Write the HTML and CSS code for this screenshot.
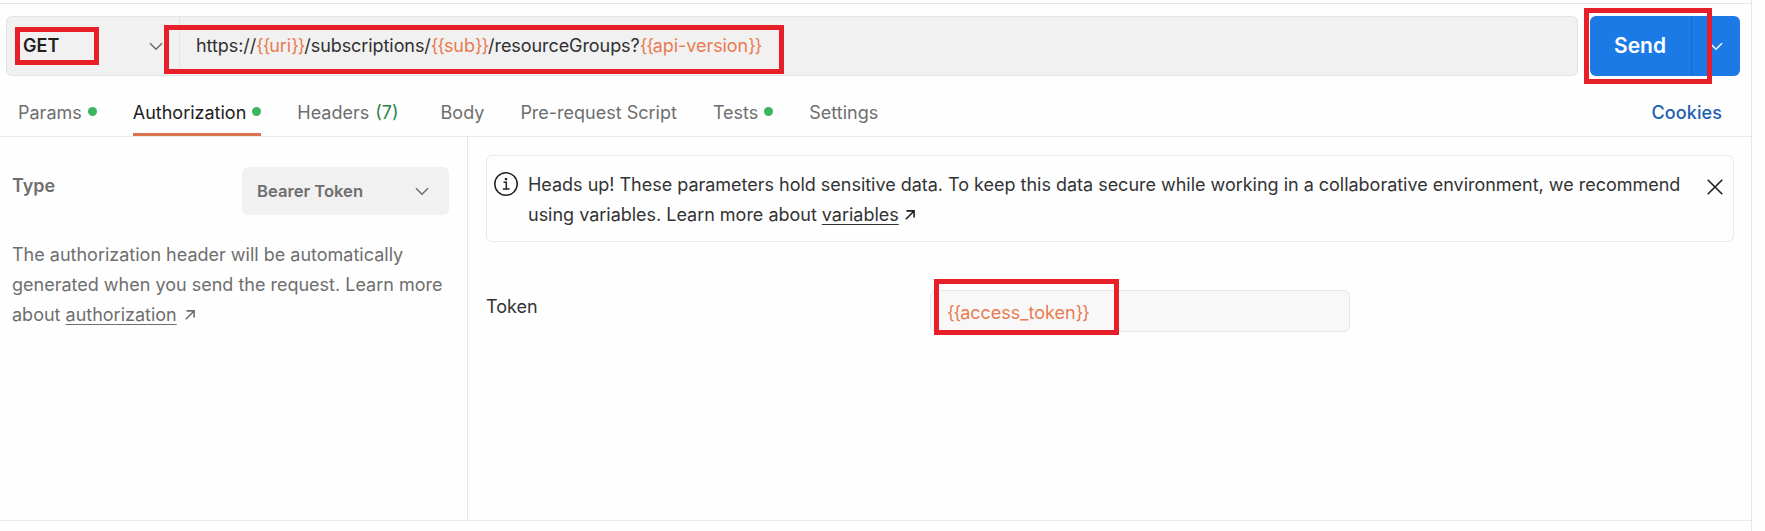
FILE: index.html
```html
<!DOCTYPE html>
<html lang="en">
<head>
<meta charset="utf-8">
<title>Request</title>
<link rel="stylesheet" href="styles.css">
</head>
<body>
<main class="pane">
  <div class="request-bar">
    <div class="url-box">
      <div class="method"><span class="method-name">GET</span>
        <svg class="chevron" width="14" height="9" viewBox="0 0 14 9"><path d="M1 1.2 7 7.2 13 1.2"/></svg>
      </div>
      <div class="url">https://<span class="var"><span class="brace">{{</span>uri<span class="brace">}}</span></span>/subscriptions/<span class="var"><span class="brace">{{</span>sub<span class="brace">}}</span></span>/resourceGroups?<span class="var"><span class="brace">{{</span>api-version<span class="brace">}}</span></span></div>
    </div>
    <div class="send">
      <span class="send-label">Send</span>
      <span class="send-more"><svg class="chevron light" width="14" height="9" viewBox="0 0 14 9"><path d="M1 1.2 7 7.2 13 1.2"/></svg></span>
    </div>
  </div>
  <nav class="tabs">
    <a class="tab">Params<i class="dot"></i></a>
    <a class="tab active">Authorization<i class="dot"></i></a>
    <a class="tab headers">Headers <span class="count">(7)</span></a>
    <a class="tab">Body</a>
    <a class="tab">Pre-request Script</a>
    <a class="tab">Tests<i class="dot"></i></a>
    <a class="tab">Settings</a>
    <a class="cookies">Cookies</a>
  </nav>
  <div class="content">
    <aside class="auth">
      <div class="type-row">
        <span class="type-label">Type</span>
        <div class="select"><span>Bearer Token</span>
          <svg class="chevron" width="14" height="9" viewBox="0 0 14 9"><path d="M1 1.2 7 7.2 13 1.2"/></svg>
        </div>
      </div>
      <p class="help">The authorization header will be automatically<br>generated when you send the request. Learn more<br>about <a class="link">authorization</a><svg class="arrow" width="10" height="10" viewBox="0 0 10 10"><path d="M.8 9.2 8.8 1.2M1.5 .9H9.1V7.5"/></svg></p>
    </aside>
    <section class="detail">
      <div class="notice">
        <svg class="info" width="24" height="24" viewBox="0 0 24 24"><circle cx="12" cy="12" r="11.2"/><path d="M9.5 10.3H12.3V16.7M8.8 17H15.5"/><rect x="10.8" y="6" width="2.4" height="2.2"/></svg>
        <p class="notice-text">Heads up! These parameters hold sensitive data. To keep this data secure while working in a collaborative environment, we recommend<br>using variables. Learn more about <a class="link">variables</a><svg class="arrow" width="10" height="10" viewBox="0 0 10 10"><path d="M.8 9.2 8.8 1.2M1.5 .9H9.1V7.5"/></svg></p>
        <svg class="close" width="16" height="16" viewBox="0 0 16 16"><path d="M.7.7 15.3 15.3M15.3.7.7 15.3"/></svg>
      </div>
      <div class="token-row">
        <span class="token-label">Token</span>
        <div class="token-input"><span class="var"><span class="brace">{{</span>access_token<span class="brace">}}</span></span></div>
      </div>
    </section>
  </div>
</main>
<div class="mark mark-method"></div>
<div class="mark mark-url"></div>
<div class="mark mark-send"></div>
<div class="mark mark-token"></div>
</body>
</html>
```
FILE: styles.css
```css
* { box-sizing: border-box; }
body {
  margin: 0;
  height: 531px;
  position: relative;
  overflow: hidden;
  background: #fefefe;
  font: 18px/30px Inter, "Liberation Sans", sans-serif;
  color: #6e6e6e;
}
p { margin: 0; white-space: nowrap; }
svg { display: block; flex: none; fill: none; }
.pane {
  width: 1752px;
  height: 531px;
  padding-top: 3px;
  border-right: 1px solid #e6e6e6;
}
.request-bar {
  display: flex;
  gap: 12px;
  height: 73px;
  padding: 12px 11px 0 6px;
  border-top: 1px solid #e6e6e6;
}
.url-box {
  display: flex;
  width: 1572px;
  height: 60px;
  background: #f1f1f1;
  border: 1px solid #e4e4e4;
  border-radius: 6px;
  color: #303030;
}
.method {
  display: flex;
  align-items: center;
  justify-content: space-between;
  width: 173px;
  padding: 0 16px;
  border-right: 1px solid #e4e4e4;
}
.method-name { font-weight: 600; color: #212121; }
.url { padding: 14px 0 0 16px; white-space: nowrap; letter-spacing: -0.07px; }
.var { color: #e97b50; }
.brace { letter-spacing: -1.1px; }
.chevron { stroke: #6b6b6b; stroke-width: 1.5; }
.chevron.light { stroke: #fff; }
.send {
  display: flex;
  width: 150px;
  height: 60px;
  border-radius: 6px;
  background: #1c7ae6;
  color: #fff;
  overflow: hidden;
}
.send-label {
  width: 102px;
  padding: 15px 0 0 24px;
  border-right: 1px solid #1a6bcb;
  font-size: 21px;
  font-weight: 600;
}
.send-more { padding: 26px 0 0 17px; }
.tabs {
  display: flex;
  gap: 36px;
  height: 61px;
  padding: 22px 29px 0 18px;
  border-bottom: 1px solid #e8e8e8;
  white-space: nowrap;
}
.tab { display: flex; height: 38px; }
.active { color: #212121; border-bottom: 3px solid #d9744f; }
.dot {
  width: 9px;
  height: 9px;
  margin: 9px 0 0 6px;
  border-radius: 50%;
  background: #3cb55e;
}
.headers { padding-right: 6px; }
.count { margin-left: 6px; color: #2b8449; }
.cookies { margin-left: auto; color: #2160b0; font-weight: 500; letter-spacing: 0.1px; }
.content {
  display: flex;
  height: 384px;
  border-bottom: 1px solid #e8e8e8;
}
.auth {
  width: 468px;
  padding: 30px 0 0 12px;
  border-right: 1px solid #e6e6e6;
}
.type-row { display: flex; justify-content: space-between; padding-right: 18px; }
.type-label { padding-top: 4px; font-weight: 600; }
.select {
  display: flex;
  align-items: center;
  justify-content: space-between;
  width: 207px;
  height: 48px;
  padding: 0 20px 0 15px;
  border-radius: 6px;
  background: #f1f1f1;
  font-size: 16.6px;
  font-weight: 600;
}
.help { margin-top: 25px; }
.link { text-decoration: underline; text-underline-offset: 3px; text-decoration-thickness: 1px; }
.arrow { display: inline-block; margin: 0 0 1px 8px; stroke: currentColor; stroke-width: 1.6; }
.detail { padding: 18px 0 0 18px; }
.notice {
  display: flex;
  width: 1248px;
  height: 87px;
  padding: 14px 10px 0 7px;
  border: 1px solid #e8e8e8;
  border-radius: 6px;
  color: #333;
}
.notice-text { letter-spacing: -0.016px; }
.info { margin: 2px 10px 0 0; stroke: #212121; stroke-width: 1.5; }
.info rect { fill: #212121; stroke: none; }
.close { margin: 9px 0 0 auto; stroke: #212121; stroke-width: 1.6; }
.notice .arrow { margin-left: 6px; stroke: #212121; }
.token-row { display: flex; padding-top: 48px; color: #333; }
.token-label { width: 444px; padding-top: 2px; }
.token-input {
  width: 420px;
  height: 42px;
  padding: 7px 0 0 16px;
  border: 1px solid #e8e8e8;
  border-radius: 6px;
  background: #f8f8f8;
}
/* highlight frames drawn over the controls */
.mark { position: absolute; border: 5px solid #e71f28; }
.mark-method { left: 15px; top: 27px; width: 84px; height: 38px; }
.mark-url { left: 164px; top: 25px; width: 620px; height: 49px; }
.mark-send { left: 1584px; top: 8px; width: 128px; height: 76px; }
.mark-token { left: 934px; top: 279px; width: 185px; height: 56px; }
```
